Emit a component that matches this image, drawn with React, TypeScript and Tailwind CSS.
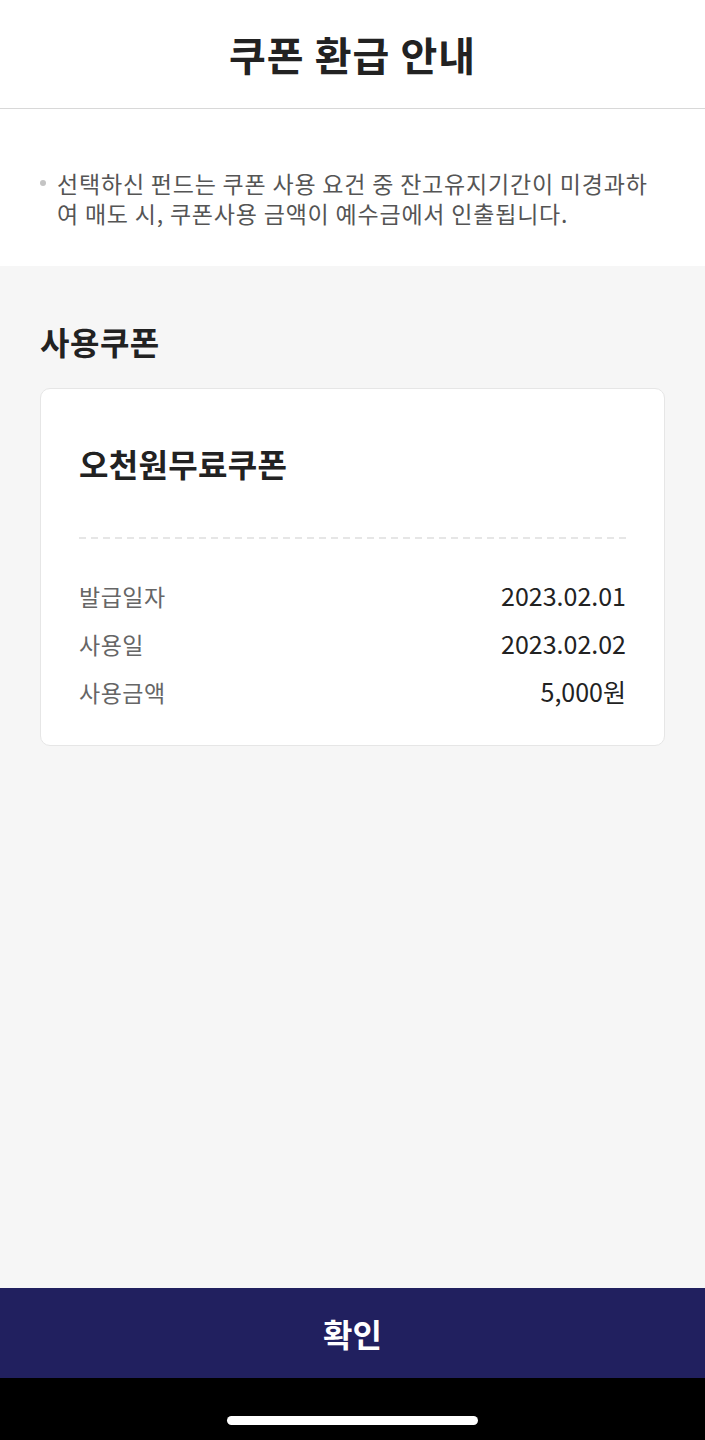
export default function App() {
  const font = { fontFamily: '"Noto Sans CJK KR", "Noto Sans", sans-serif' };
  const rows: [string, string][] = [
    ["발급일자", "2023.02.01"],
    ["사용일", "2023.02.02"],
    ["사용금액", "5,000원"],
  ];
  return (
    <div
      className="flex min-h-[1440px] w-full flex-col bg-[#f6f6f6] font-['Noto_Sans_CJK_KR',_'Noto_Sans',_sans-serif]"
      style={font}
    >
      <header className="flex h-[109px] items-center justify-center border-b border-[#d8d8d8] bg-white">
        <h1 className="text-[40px] font-bold leading-[46px] tracking-[1px] text-[#222222]">
          쿠폰 환급 안내
        </h1>
      </header>

      <section className="bg-white px-[40px] pt-[59px] pb-[38px]">
        <div className="flex gap-[11px]">
          <span className="mt-[12px] h-[6px] w-[6px] shrink-0 rounded-full bg-[#c4c4c4]" />
          <p className="whitespace-nowrap text-[23px] leading-[30px] tracking-[0.8px] text-[#555555]">
            선택하신 펀드는 쿠폰 사용 요건 중 잔고유지기간이 미경과하
            <br />
            여 매도 시, 쿠폰사용 금액이 예수금에서 인출됩니다.
          </p>
        </div>
      </section>

      <main className="flex-1 px-[40px] pt-[55px]">
        <h2 className="text-[32px] font-bold leading-[40px] tracking-[0.5px] text-[#222222]">
          사용쿠폰
        </h2>
        <div className="mt-[27px] rounded-[10px] border border-[#e6e6e6] bg-white px-[38px] pt-[54px] pb-[29px]">
          <h3 className="text-[32px] font-bold leading-[40px] tracking-[0.3px] text-[#222222]">
            오천원무료쿠폰
          </h3>
          <div className="mt-[54px] h-[2px] w-full bg-[repeating-linear-gradient(to_right,#e6e6e6_0px,#e6e6e6_7px,transparent_7px,transparent_12px)]" />
          <div className="mt-[33px] flex flex-col">
            {rows.map(([k, v]) => (
              <div key={k} className="flex h-[48px] items-center justify-between">
                <span className="text-[23px] tracking-[0.5px] text-[#666666]">{k}</span>
                <span className="text-[25px] text-[#222222]">{v}</span>
              </div>
            ))}
          </div>
        </div>
      </main>

      <button className="flex h-[90px] w-full items-center justify-center bg-[#21205f] text-[32px] font-bold text-white">
        확인
      </button>
      <div className="flex h-[62px] items-start justify-center bg-black pt-[38px]">
        <div className="h-[9px] w-[251px] rounded-full bg-white" />
      </div>
    </div>
  );
}
